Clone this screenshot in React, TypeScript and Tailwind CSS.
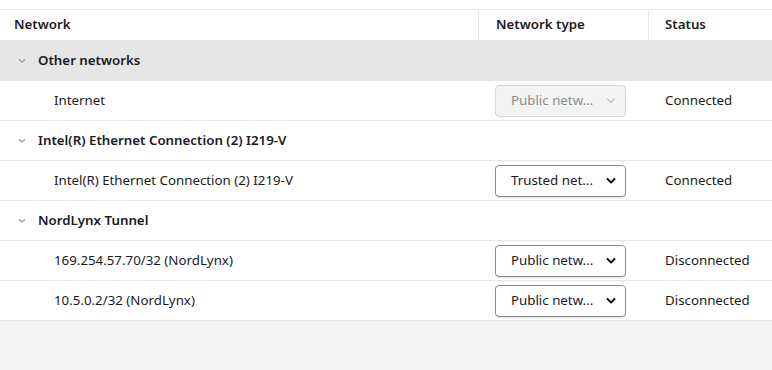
import React from 'react';

type Row = { name: string; type: string; status: string; disabled?: boolean };
type Group = { title: string; selected?: boolean; rows: Row[] };

const groups: Group[] = [
    { title: 'Other networks', selected: true, rows: [{ name: 'Internet', type: 'Public netw...', status: 'Connected', disabled: true }] },
    { title: 'Intel(R) Ethernet Connection (2) I219-V', rows: [{ name: 'Intel(R) Ethernet Connection (2) I219-V', type: 'Trusted net...', status: 'Connected' }] },
    {
        title: 'NordLynx Tunnel',
        rows: [
            { name: '169.254.57.70/32 (NordLynx)', type: 'Public netw...', status: 'Disconnected' },
            { name: '10.5.0.2/32 (NordLynx)', type: 'Public netw...', status: 'Disconnected' },
        ],
    },
];

const Chevron = ({ className, w = 1.6 }: { className?: string; w?: number }) => (
    <svg width="10" height="6" viewBox="0 0 10 6" className={className}>
        <path d="M1.5 1l3.5 3.5L8.5 1" fill="none" stroke="currentColor" strokeWidth={w} strokeLinecap="round" strokeLinejoin="round" />
    </svg>
);

const TypeSelect = ({ label, disabled }: { label: string; disabled?: boolean }) => (
    <div
        className={`w-[131px] h-[32px] rounded-[4px] border flex items-center pl-[15px] pr-[9px] justify-between ${
            disabled ? 'bg-[#f3f3f3] border-[#d4d4d4] text-[#8c8c8c]' : 'bg-white border-[#8a8a8a] text-[#1b1b1b] shadow-[0_1px_1px_rgba(0,0,0,0.12)]'
        }`}
    >
        <span>{label}</span>
        <Chevron className={disabled ? 'text-[#c4c4c4]' : 'text-[#1b1b1b]'} w={disabled ? 1.2 : 2} />
    </div>
);

export default function App() {
    return (
        <div className="w-[772px] h-[370px] bg-[#f4f4f4] flex flex-col text-[13.3px] text-[#1b1b1b]" style={{ fontFamily: '"Noto Sans", "Open Sans", sans-serif' }}>
            <div className="h-[10px] bg-white border-b border-[#e8e8e8] shrink-0"></div>
            {/* header */}
            <div className="flex h-[30px] bg-white font-semibold text-[#1b1b1b] shrink-0">
                <div className="w-[478px] pl-[14px] flex items-center">Network</div>
                <div className="w-[170px] pl-[17px] flex items-center border-l border-[#e6e6e6]">Network type</div>
                <div className="flex-1 pl-[16px] flex items-center border-l border-[#e6e6e6]">Status</div>
            </div>

            {groups.map((g) => (
                <React.Fragment key={g.title}>
                    <div className={`flex h-[40px] items-center border-t border-[#e6e6e6] shrink-0 ${g.selected ? 'bg-[#e6e6e6] border-[#d9d9d9]' : 'bg-white'}`}>
                        <div className="w-[38px] pl-[17px] flex items-center">
                            <Chevron className="text-[#9a9a9a] scale-75" />
                        </div>
                        <span className="font-semibold">{g.title}</span>
                    </div>
                    {g.rows.map((r) => (
                        <div key={r.name} className="flex h-[40px] items-center bg-white border-t border-[#e6e6e6] shrink-0">
                            <div className="w-[478px] pl-[54px]">{r.name}</div>
                            <div className="w-[170px] pl-[17px] flex items-center">
                                <TypeSelect label={r.type} disabled={r.disabled} />
                            </div>
                            <div className="flex-1 pl-[17px]">{r.status}</div>
                        </div>
                    ))}
                </React.Fragment>
            ))}
            <div className="border-t border-[#e6e6e6]"></div>
        </div>
    );
}
